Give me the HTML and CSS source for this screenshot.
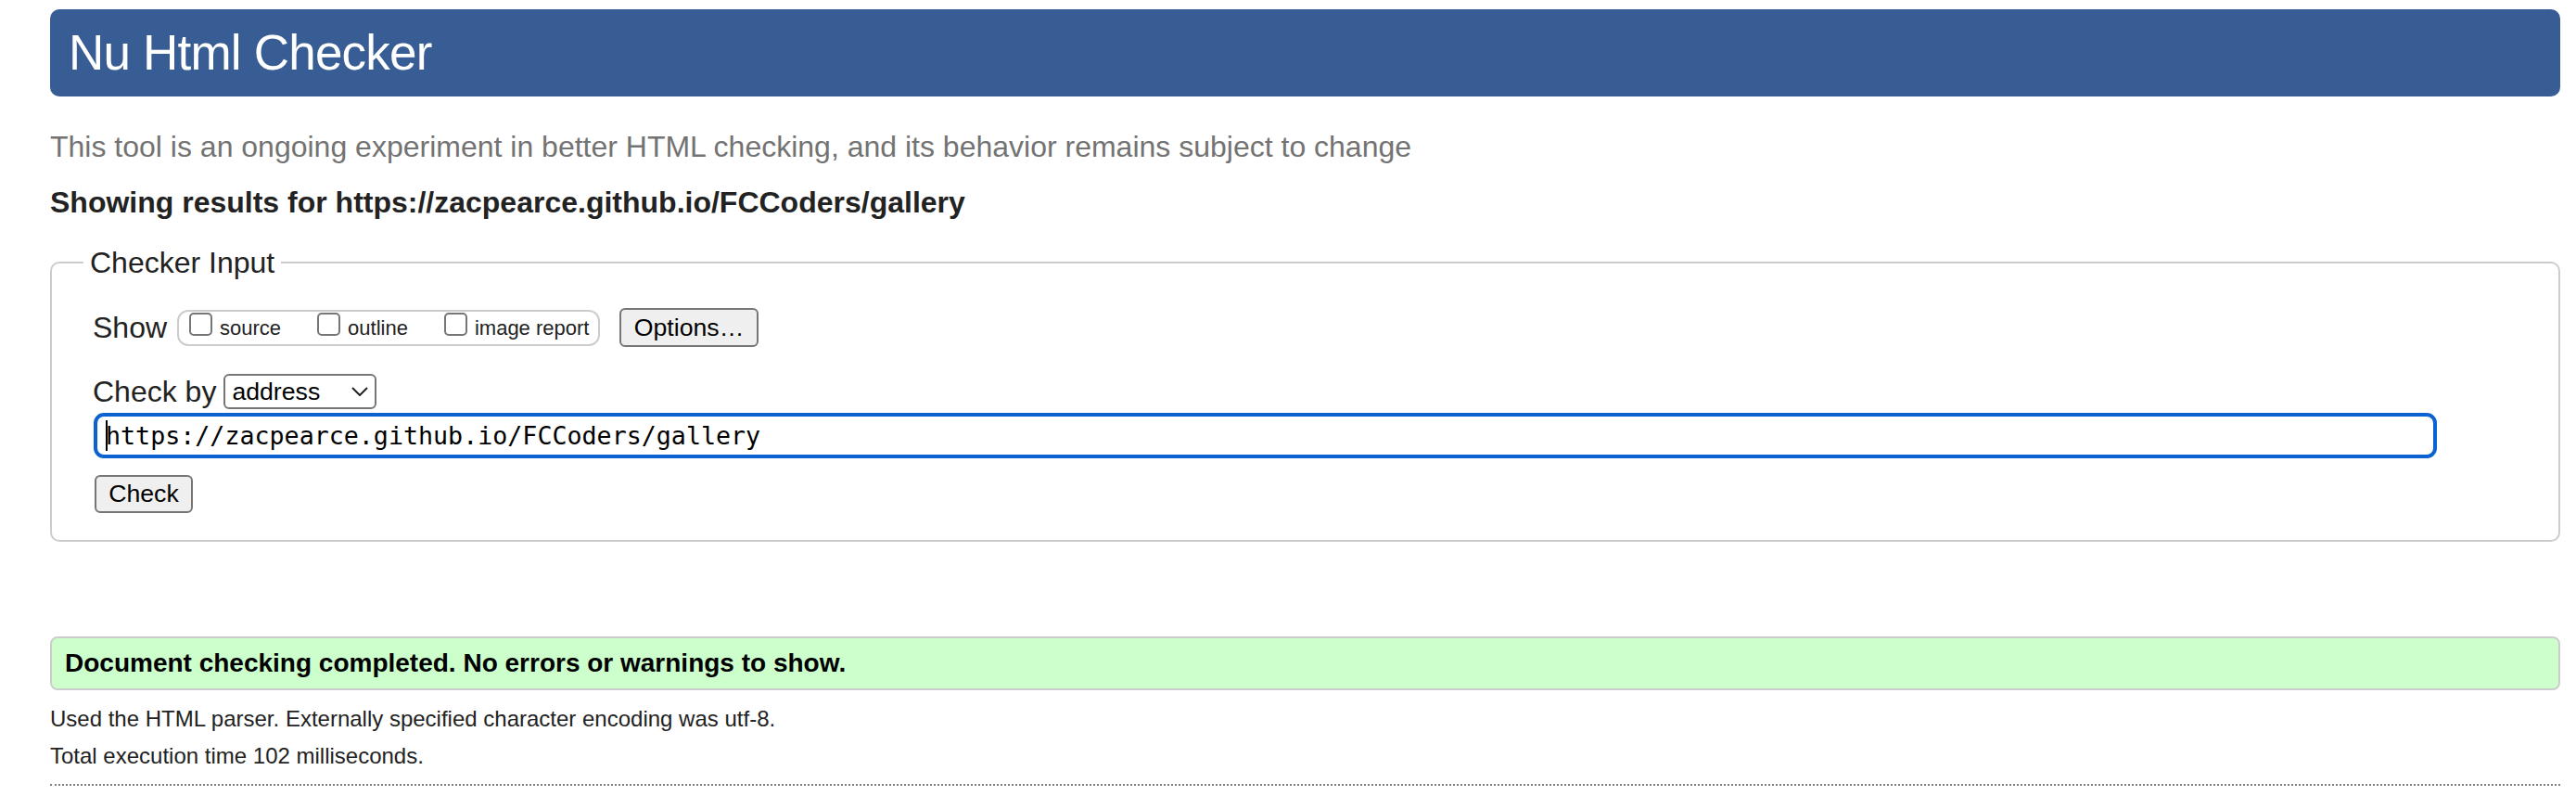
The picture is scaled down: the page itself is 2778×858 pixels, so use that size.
FILE: index.html
```html
<!DOCTYPE html>
<html lang="en">
<head>
<meta charset="utf-8">
<title>Showing results for https://zacpearce.github.io/FCCoders/gallery - Nu Html Checker</title>
<link rel="stylesheet" href="styles.css">
</head>
<body>
<div class="page">
  <h1 class="title">Nu Html Checker</h1>
  <p class="tagline">This tool is an ongoing experiment in better HTML checking, and its behavior remains subject to change</p>
  <p class="showing">Showing results for https://zacpearce.github.io/FCCoders/gallery</p>
  <form class="checker-form">
    <fieldset class="checker">
      <legend class="checker-legend">Checker Input</legend>
      <div class="show-row">
        <span class="field-label">Show</span>
        <div class="show-opts" role="group">
          <label class="opt"><input type="checkbox"><span class="opt-text">source</span></label>
          <label class="opt"><input type="checkbox"><span class="opt-text">outline</span></label>
          <label class="opt"><input type="checkbox"><span class="opt-text">image report</span></label>
        </div>
        <button type="button" class="btn btn-options">Options…</button>
      </div>
      <div class="by-row">
        <span class="field-label">Check by</span>
        <div class="select">
          <span class="select-value">address</span>
          <svg class="chevron" width="18" height="10" viewBox="0 0 18 10"><polyline points="1,1 9,9 17,1" fill="none" stroke="#222" stroke-width="2"/></svg>
        </div>
      </div>
      <div class="url-input"><span class="caret"></span>https://zacpearce.github.io/FCCoders/gallery</div>
      <button type="button" class="btn btn-check">Check</button>
    </fieldset>
  </form>
  <div class="success">Document checking completed. No errors or warnings to show.</div>
  <p class="details details-first">Used the HTML parser. Externally specified character encoding was utf-8.</p>
  <p class="details details-second">Total execution time 102 milliseconds.</p>
  <div class="dotted-rule"></div>
</div>
</body>
</html>
```
FILE: styles.css
```css
* { box-sizing: border-box; }
html, body { margin: 0; padding: 0; background: #fff; }
body {
  font-family: "Liberation Sans", Arial, Helvetica, sans-serif;
  color: #222;
}
.page {
  padding: 10px 17px 0 54px;
}
.title {
  margin: 0;
  height: 94px;
  line-height: 94px;
  padding-left: 20px;
  background: #385d95;
  color: #fff;
  border-radius: 10px;
  font-size: 53px;
  font-weight: normal;
  letter-spacing: -0.8px;
}
.tagline {
  margin: 36px 0 0;
  font-size: 32px;
  line-height: 37px;
  color: #737373;
}
.showing {
  margin: 23px 0 0;
  font-size: 32px;
  line-height: 37px;
  font-weight: bold;
  color: #222;
}
.checker-form { margin: 0; }
.checker {
  margin: 27px 0 0;
  padding: 30px 0 29px 44px;
  border: 2px solid #ccc;
  border-radius: 10px;
  min-width: 0;
}
.checker-legend {
  font-size: 32px;
  line-height: 38px;
  padding: 0 7px;
  margin-left: -10px;
  color: #222;
}
.show-row {
  display: flex;
  align-items: center;
  height: 42px;
}
.field-label {
  font-size: 32px;
  line-height: 37px;
  color: #222;
}
.show-opts {
  display: flex;
  margin-left: 11px;
  padding: 1px 0 0 11px;
  width: 456px;
  height: 39px;
  border: 2px solid #ccc;
  border-radius: 12px;
}
.opt {
  display: flex;
  align-items: flex-start;
  font-size: 22px;
  line-height: 26px;
  color: #222;
}
.opt + .opt { margin-left: 39px; }
.opt input {
  -webkit-appearance: none;
  appearance: none;
  width: 25px;
  height: 25px;
  margin: 0 8px 0 0;
  border: 2px solid #767676;
  border-radius: 5px;
  background: #fff;
}
.opt-text { margin-top: 4px; }
.btn {
  font-family: "Liberation Sans", Arial, Helvetica, sans-serif;
  font-size: 26.67px;
  color: #000;
  background: #efefef;
  border: 2px solid #767676;
  border-radius: 6px;
  padding: 0;
}
.btn-options {
  width: 150px;
  height: 42px;
  margin-left: 21px;
}
.by-row {
  display: flex;
  align-items: center;
  height: 38px;
  margin-top: 29px;
}
.select {
  display: flex;
  align-items: center;
  margin-left: 8px;
  width: 165px;
  height: 38px;
  padding-left: 7px;
  border: 2px solid #767676;
  border-radius: 6px;
  background: #fff;
  font-size: 26.67px;
  color: #000;
}
.chevron { margin-left: auto; margin-right: 7px; }
.url-input {
  margin: 4px 0 0 1px;
  width: 2527px;
  height: 49px;
  padding-left: 9px;
  border: 4px solid #0b62d0;
  border-radius: 11px;
  font-family: "DejaVu Sans Mono", "Liberation Mono", monospace;
  font-size: 26.67px;
  line-height: 41px;
  color: #000;
  white-space: nowrap;
}
.caret {
  display: inline-block;
  width: 2px;
  height: 33px;
  margin-right: -2px;
  background: #000;
  vertical-align: -7px;
}
.btn-check {
  display: block;
  margin: 18px 0 0 2px;
  width: 106px;
  height: 41px;
}
.success {
  margin-top: 102px;
  height: 58px;
  padding-left: 14px;
  border: 2px solid #ccc;
  border-radius: 8px;
  background: #cfc;
  font-size: 28px;
  line-height: 54px;
  font-weight: bold;
  color: #000;
}
.details {
  margin: 0;
  font-size: 24px;
  line-height: 28px;
  color: #222;
}
.details-first { margin-top: 17px; }
.details-second { margin-top: 12px; }
.dotted-rule {
  margin-top: 16px;
  border-top: 2px dotted #808080;
}
```
